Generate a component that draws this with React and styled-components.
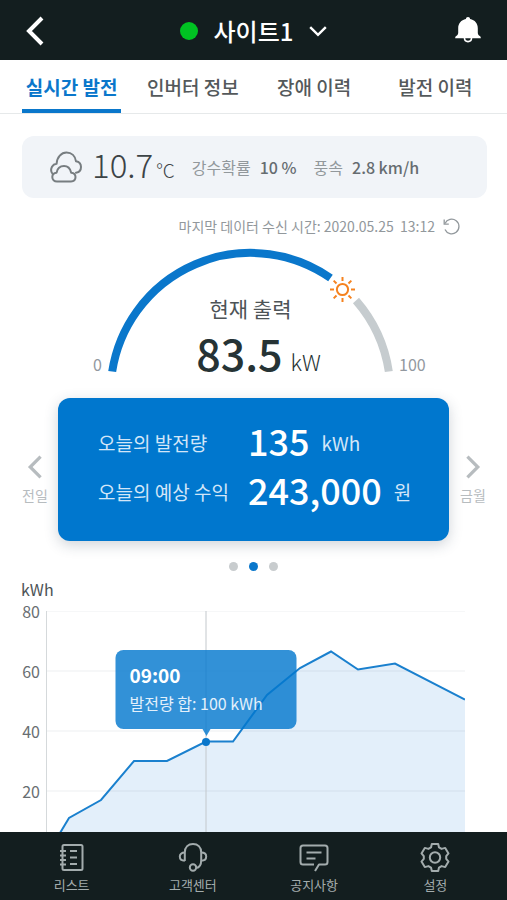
import React, { useState } from 'react';
import styled, { createGlobalStyle } from 'styled-components';

// DATA
const TABS = ['실시간 발전', '인버터 정보', '장애 이력', '발전 이력'];

const SLIDES = ['전일', '금일', '금월'];

const TICKS = [80, 60, 40, 20];

// x runs over the plot width, y is kWh
const PLOT_WIDTH = 419;
const PLOT_HEIGHT = 240;
const POINTS = [
  [0, 0],
  [14, 6],
  [23, 11],
  [55, 17],
  [88, 30],
  [121, 30],
  [160, 36.5],
  [187, 36.5],
  [221, 52],
  [254, 61],
  [285, 66.5],
  [312, 60.5],
  [349, 62.5],
  [419, 50.5],
];
const SELECTED = POINTS[6];

const toY = (value) => PLOT_HEIGHT - value * 3;
const LINE = POINTS.map(([x, value]) => `${x},${toY(value)}`).join(' ');

// STYLES
const GlobalStyle = createGlobalStyle`
  * {
    box-sizing: border-box;
  }

  body {
    margin: 0;
    background: #ffffff;
    color: #4d5356;
    font-family: 'Noto Sans CJK KR', 'Noto Sans', sans-serif;
  }

  button {
    margin: 0;
    padding: 0;
    border: none;
    background: none;
    color: inherit;
    font: inherit;
    cursor: pointer;
  }

  svg {
    display: block;
  }
`;

const Screen = styled.div`
  display: flex;
  flex-direction: column;
  height: 100vh;
`;

const Header = styled.header`
  display: grid;
  flex: none;
  grid-template-columns: 1fr auto 1fr;
  align-items: center;
  height: 60px;
  padding: 2px 25px 0;
  background: #131e1f;
  color: #ffffff;
`;

const BackButton = styled.button`
  justify-self: start;
`;

const BellButton = styled.button`
  justify-self: end;
`;

const SiteButton = styled.button`
  display: flex;
  align-items: center;
  gap: 16px;
  font-size: 24px;
  font-weight: 500;
  line-height: 32px;
`;

const Status = styled.span`
  width: 18px;
  height: 18px;
  border-radius: 50%;
  background: #00c322;
`;

const Tabs = styled.div`
  display: grid;
  flex: none;
  grid-template-columns: repeat(4, 1fr);
  padding: 0 11px;
  border-bottom: 1px solid #e6e9ea;
`;

const Tab = styled.button`
  height: 53px;
  margin: 0 11px;
  padding-top: 4px;
  border-bottom: 4px solid ${({ $active }) => ($active ? '#0a77cb' : 'transparent')};
  color: ${({ $active }) => ($active ? '#0a77cb' : '#54595b')};
  font-size: 19px;
  font-weight: ${({ $active }) => ($active ? 700 : 500)};
  line-height: 44px;
  white-space: nowrap;
`;

const Main = styled.main`
  flex: 1;
  min-height: 0;
  overflow-y: auto;
  scrollbar-width: none;
`;

const Weather = styled.section`
  display: flex;
  align-items: center;
  height: 62px;
  margin: 22px 20px 0 22px;
  padding: 0 28px;
  border-radius: 12px;
  background: #f1f4f8;
  white-space: nowrap;
`;

const Temperature = styled.div`
  margin-left: 10px;
  padding-bottom: 7px;
  color: #3c4346;
  font-size: 33px;
  font-weight: 300;
  line-height: 40px;
`;

const Degree = styled.span`
  margin-left: 3px;
  font-size: 19px;
  line-height: 1;
`;

const WeatherItem = styled.div`
  display: flex;
  gap: 9px;
  margin-left: 17px;
  color: #92989c;
  font-size: 16px;
  line-height: 24px;
`;

const WeatherValue = styled.span`
  color: #666c70;
  font-weight: 500;
`;

const Updated = styled.div`
  display: flex;
  align-items: center;
  justify-content: flex-end;
  gap: 8px;
  margin-top: 16px;
  padding-right: 47px;
  color: #92989c;
  font-size: 14px;
  line-height: 24px;
`;

const Gauge = styled.section`
  display: grid;
  grid-template-columns: 1fr auto 1fr;
  align-items: end;
  gap: 4px;
  margin-top: 10px;
  padding-right: 6px;
`;

const GaugeLimit = styled.span`
  color: #92989f;
  font-size: 16px;
  line-height: 20px;
  text-align: ${({ $align }) => $align};
`;

const Dial = styled.div`
  display: grid;
  justify-items: center;

  > * {
    grid-area: 1 / 1;
  }
`;

const Reading = styled.div`
  display: flex;
  flex-direction: column;
  align-items: center;
  justify-content: flex-end;
  gap: 8px;
  padding-bottom: 2px;
`;

const ReadingLabel = styled.div`
  font-size: 21px;
  line-height: 32px;
`;

const ReadingValue = styled.div`
  padding-left: 16px;
  color: #263335;
  font-size: 43px;
  font-weight: 500;
  line-height: 40px;
`;

const ReadingUnit = styled.span`
  margin-left: 8px;
  font-size: 22px;
  font-weight: 300;
  line-height: 1;
`;

const Carousel = styled.section`
  display: grid;
  grid-template-columns: 58px 1fr 58px;
  align-items: center;
  margin-top: 24px;
`;

const SlideButton = styled.button`
  display: flex;
  flex-direction: column;
  align-items: center;
  gap: 6px;
  padding: ${({ $side }) => ($side === 'right' ? '20px 10px 0 0' : '20px 0 0 12px')};
  color: #b7bcbf;
  font-size: 14px;
  line-height: 20px;
`;

const Card = styled.dl`
  display: grid;
  grid-template-columns: 150px 1fr;
  align-content: center;
  align-items: start;
  row-gap: 1px;
  height: 143px;
  margin: 0;
  padding: 0 16px 4px 40px;
  border-radius: 12px;
  background: #0077ce;
  box-shadow: 0 4px 14px rgba(40, 60, 80, 0.22);
  white-space: nowrap;
`;

const CardLabel = styled.dt`
  color: #d3e6f8;
  font-size: 19px;
  line-height: 48px;
`;

const CardValue = styled.dd`
  display: flex;
  align-items: flex-start;
  gap: 12px;
  margin: 0;
  color: #ffffff;
  font-size: 36px;
  font-weight: 500;
  line-height: 42px;
`;

const CardUnit = styled.span`
  color: #d3e6f8;
  font-size: 19px;
  font-weight: 400;
  line-height: 48px;
`;

const Dots = styled.div`
  display: flex;
  justify-content: center;
  gap: 11px;
  margin-top: 21px;
`;

const Dot = styled.button`
  width: 9px;
  height: 9px;
  border-radius: 50%;
  background: ${({ $active }) => ($active ? '#0a77cb' : '#c8ccce')};
`;

const Chart = styled.section`
  margin: 8px 42px 0 21px;
`;

const ChartUnit = styled.div`
  font-size: 16px;
  line-height: 20px;
`;

const ChartBody = styled.div`
  display: grid;
  grid-template-columns: 19px 1fr;
  gap: 6px;
  margin-top: 12px;
`;

const Scale = styled.div`
  display: flex;
  flex-direction: column;
  justify-content: space-between;
  height: 200px;
  margin-top: -10px;
  color: #686e71;
  font-size: 16px;
  line-height: 20px;
  text-align: right;
`;

const Plot = styled.div`
  position: relative;
  height: 240px;

  line,
  polyline {
    vector-effect: non-scaling-stroke;
  }
`;

const Marker = styled.span`
  position: absolute;
  width: 8px;
  height: 8px;
  border-radius: 50%;
  background: #0a77cb;
  transform: translate(-50%, -50%);
`;

const Tooltip = styled.div`
  position: absolute;
  width: 181px;
  height: 79px;
  padding: 10px 14px;
  border-radius: 8px;
  background: rgba(2, 119, 206, 0.81);
  color: #ffffff;
  font-size: 16px;
  line-height: 29px;
  white-space: nowrap;
  transform: translate(-50%, -92px);

  &::after {
    position: absolute;
    top: 100%;
    left: 50%;
    border: 4px solid transparent;
    border-top: 7px solid rgba(2, 119, 206, 0.81);
    border-bottom: none;
    content: '';
    transform: translateX(-50%);
  }
`;

const TooltipTime = styled.div`
  font-size: 19px;
  font-weight: 700;
`;

const TooltipText = styled.div`
  color: #e3f0fb;
`;

const BottomNav = styled.nav`
  display: grid;
  flex: none;
  grid-template-columns: repeat(4, 1fr);
  height: 68px;
  padding: 11px 11px 0;
  background: #131e1f;
`;

const NavLink = styled.a`
  display: flex;
  flex-direction: column;
  align-items: center;
  gap: 2px;
  color: #a3acad;
  font-size: 13px;
  line-height: 20px;
  text-decoration: none;
`;

// ICONS
const Chevron = ({ direction, width, height, stroke }) => {
  const paths = {
    left: 'M17 2 4 15 17 28',
    right: 'M3 2 16 15 3 28',
    down: 'M2 3 15 16 28 3',
  };

  return (
    <svg
      width={width}
      height={height}
      viewBox={direction === 'down' ? '0 0 30 19' : '0 0 20 30'}
      fill="none"
      stroke="currentColor"
      strokeWidth={stroke}
      aria-hidden="true"
    >
      <path d={paths[direction]} />
    </svg>
  );
};

const BellIcon = () => (
  <svg width="28" height="30" viewBox="0 0 28 30" aria-hidden="true">
    <path
      d="M14 1c1.300 0 2 .8 2.100 2 4.800 1 7.700 4.500 7.700 9.200v4.600c0 1.700.8 2.500 2 3.300.8.500 1 1.100 1 2.100H1.200c0-1 .2-1.600 1-2.100 1.200-.8 2-1.600 2-3.300v-4.600C4.200 7.500 7.100 4 11.900 3c.1-1.200.8-2 2.100-2z"
      fill="currentColor"
    />
    <path d="M10.500 22c0 4.800 7 4.800 7 0" fill="none" stroke="currentColor" strokeWidth="1.600" />
  </svg>
);

const CloudIcon = () => (
  <svg
    width="32"
    height="32"
    viewBox="0 0 32 32"
    fill="none"
    stroke="#777d80"
    strokeWidth="2"
    strokeLinecap="round"
    strokeLinejoin="round"
    aria-hidden="true"
  >
    <path d="M7 30.500h14c3 0 4.500-1.900 4.500-4.400s-1.700-4.200-4.300-4.400C20.200 17.500 17.500 15 14 15c-3.800 0-6.700 2.700-7.400 6.700-2.600.2-4.300 1.900-4.300 4.400s1.900 4.400 4.700 4.400z" />
    <path d="M2.600 23C1 21 .8 18 2 15.700c1-1.800 2.600-2.700 4.600-2.900C7 6 11.400 1.500 16.500 1.500S25.300 5 26 10.300c3 .6 5 2.800 5 5.600 0 3-2 5.300-5 5.900" />
  </svg>
);

const ReloadIcon = () => (
  <svg width="17" height="17" viewBox="0 0 17 17" fill="none" stroke="#92989c" aria-hidden="true">
    <path d="M2 5.500A7.300 7.300 0 1 1 2 11.500" strokeWidth="1.300" />
    <path d="M1.200 1.500v4.600h4.600" strokeWidth="1.300" />
  </svg>
);

const ListIcon = () => (
  <>
    <rect x="4.500" y="2" width="20" height="25" rx="1.500" />
    <path d="M2 8h6M2 12.500h6M2 17h6M2 21.500h6M12 8h7M12 14.500h7M12 21h7" />
  </>
);

const HeadsetIcon = () => (
  <>
    <path d="M5.800 18V9.500C5.800 4 9.300 1 14 1s8.200 3 8.200 8.500V17c0 4-1.200 7.500-5 8" />
    <path d="M5.800 9.500C2.500 9.500.8 11.200.8 13.600s1.700 4.200 5 4.200M22.200 9.500c3.300 0 5 1.700 5 4.100s-1.700 4.200-5 4.200" />
    <circle cx="14" cy="24.500" r="3.200" />
  </>
);

const NoticeIcon = () => (
  <>
    <path d="M15 28 19 21.500H25c1.500 0 2.500-1 2.500-2.500V5c0-1.500-1-2.500-2.500-2.500H3C1.500 2.500.5 3.500.5 5v14c0 1.500 1 2.500 2.500 2.500h11" />
    <path d="M6.500 9.500h15M6.500 15.500h9" />
  </>
);

const GearIcon = () => (
  <>
    <path d="M10.800 1h6.400l.8 3.400 2.600 1.500 3.600-1 3.300 5.500-2.300 2.800v2.600l2.300 2.800-3.300 5.500-3.600-1-2.600 1.500-.8 3.400h-6.400l-.8-3.400-2.600-1.500-3.600 1L.5 18.600l2.300-2.800v-2.600L.5 10.400l3.300-5.500 3.600 1L10 4.400z" />
    <circle cx="14" cy="14.500" r="5.200" />
  </>
);

const NAV_ITEMS = [
  { label: '리스트', Icon: ListIcon },
  { label: '고객센터', Icon: HeadsetIcon },
  { label: '공지사항', Icon: NoticeIcon },
  { label: '설정', Icon: GearIcon },
];

// COMPONENTS
const OutputGauge = () => (
  <Gauge>
    <GaugeLimit $align="right">0</GaugeLimit>

    <Dial>
      <svg width="289" height="126" viewBox="0 0 289 126" fill="none" aria-hidden="true">
        <path d="M6.200 123.500A140 140 0 0 1 224.500 30" stroke="#0a77cb" strokeWidth="8" />
        <path d="M250 52.500A140 140 0 0 1 282.800 123.500" stroke="#c6cccf" strokeWidth="8" />
        <g transform="translate(236.500 41.500)" stroke="#f5821f" strokeWidth="2">
          <circle r="5.600" />
          {[0, 45, 90, 135, 180, 225, 270, 315].map((angle) => (
            <path key={angle} d="M0-8.500v-4" transform={`rotate(${angle})`} />
          ))}
        </g>
      </svg>

      <Reading>
        <ReadingLabel>현재 출력</ReadingLabel>
        <ReadingValue>
          83.5<ReadingUnit>kW</ReadingUnit>
        </ReadingValue>
      </Reading>
    </Dial>

    <GaugeLimit $align="left">100</GaugeLimit>
  </Gauge>
);

const PowerChart = () => {
  const [x, value] = SELECTED;
  const position = { left: `${(x / PLOT_WIDTH) * 100}%`, top: toY(value) };

  return (
    <Chart>
      <ChartUnit>kWh</ChartUnit>

      <ChartBody>
        <Scale>
          {TICKS.map((tick) => (
            <span key={tick}>{tick}</span>
          ))}
        </Scale>

        <Plot>
          <svg
            width="100%"
            height={PLOT_HEIGHT}
            viewBox={`0 0 ${PLOT_WIDTH} ${PLOT_HEIGHT}`}
            preserveAspectRatio="none"
            aria-hidden="true"
          >
            <polygon points={`${LINE} ${PLOT_WIDTH},${PLOT_HEIGHT}`} fill="#e3effa" />
            {TICKS.map((tick) => (
              <line
                key={tick}
                x1="0"
                x2={PLOT_WIDTH}
                y1={toY(tick)}
                y2={toY(tick)}
                stroke="#5a6a75"
                strokeOpacity="0.1"
              />
            ))}
            <line x1="0" x2="0" y1="0" y2={PLOT_HEIGHT} stroke="#d5d9db" strokeWidth="2" />
            <line x1={x} x2={x} y1="0" y2={PLOT_HEIGHT} stroke="#c3c8cc" />
            <polyline points={LINE} fill="none" stroke="#1a80ce" strokeWidth="2" />
          </svg>

          <Marker style={position} />
          <Tooltip style={position}>
            <TooltipTime>09:00</TooltipTime>
            <TooltipText>발전량 합: 100 kWh</TooltipText>
          </Tooltip>
        </Plot>
      </ChartBody>
    </Chart>
  );
};

const App = () => {
  // STATE
  const [tab, setTab] = useState(0);
  const [slide, setSlide] = useState(1);

  // RENDER
  return (
    <Screen>
      <GlobalStyle />

      <Header>
        <BackButton type="button" aria-label="뒤로">
          <Chevron direction="left" width={20} height={30} stroke={4} />
        </BackButton>

        <SiteButton type="button">
          <Status />
          사이트1
          <Chevron direction="down" width={18} height={12} stroke={4} />
        </SiteButton>

        <BellButton type="button" aria-label="알림">
          <BellIcon />
        </BellButton>
      </Header>

      <Tabs role="tablist">
        {TABS.map((label, index) => (
          <Tab
            key={label}
            type="button"
            role="tab"
            aria-selected={tab === index}
            $active={tab === index}
            onClick={() => setTab(index)}
          >
            {label}
          </Tab>
        ))}
      </Tabs>

      <Main>
        <Weather>
          <CloudIcon />
          <Temperature>
            10.7<Degree>°C</Degree>
          </Temperature>
          <WeatherItem>
            강수확률 <WeatherValue>10 %</WeatherValue>
          </WeatherItem>
          <WeatherItem>
            풍속 <WeatherValue>2.8 km/h</WeatherValue>
          </WeatherItem>
        </Weather>

        <Updated>
          마지막 데이터 수신 시간: 2020.05.25&nbsp; 13:12
          <button type="button" aria-label="새로고침">
            <ReloadIcon />
          </button>
        </Updated>

        <OutputGauge />

        <Carousel>
          <SlideButton type="button" $side="left" onClick={() => setSlide(0)}>
            <Chevron direction="left" width={16} height={24} stroke={4} />
            전일
          </SlideButton>

          <Card>
            <CardLabel>오늘의 발전량</CardLabel>
            <CardValue>
              135<CardUnit>kWh</CardUnit>
            </CardValue>
            <CardLabel>오늘의 예상 수익</CardLabel>
            <CardValue>
              243,000<CardUnit>원</CardUnit>
            </CardValue>
          </Card>

          <SlideButton type="button" $side="right" onClick={() => setSlide(2)}>
            <Chevron direction="right" width={16} height={24} stroke={4} />
            금월
          </SlideButton>
        </Carousel>

        <Dots>
          {SLIDES.map((label, index) => (
            <Dot
              key={label}
              type="button"
              aria-label={label}
              $active={slide === index}
              onClick={() => setSlide(index)}
            />
          ))}
        </Dots>

        <PowerChart />
      </Main>

      <BottomNav>
        {NAV_ITEMS.map(({ label, Icon }) => (
          <NavLink key={label} href="#">
            <svg
              width="30"
              height="30"
              viewBox="-1 0 30 30"
              fill="none"
              stroke="currentColor"
              strokeWidth="2"
              strokeLinejoin="round"
              aria-hidden="true"
            >
              <Icon />
            </svg>
            {label}
          </NavLink>
        ))}
      </BottomNav>
    </Screen>
  );
};

export default App;
